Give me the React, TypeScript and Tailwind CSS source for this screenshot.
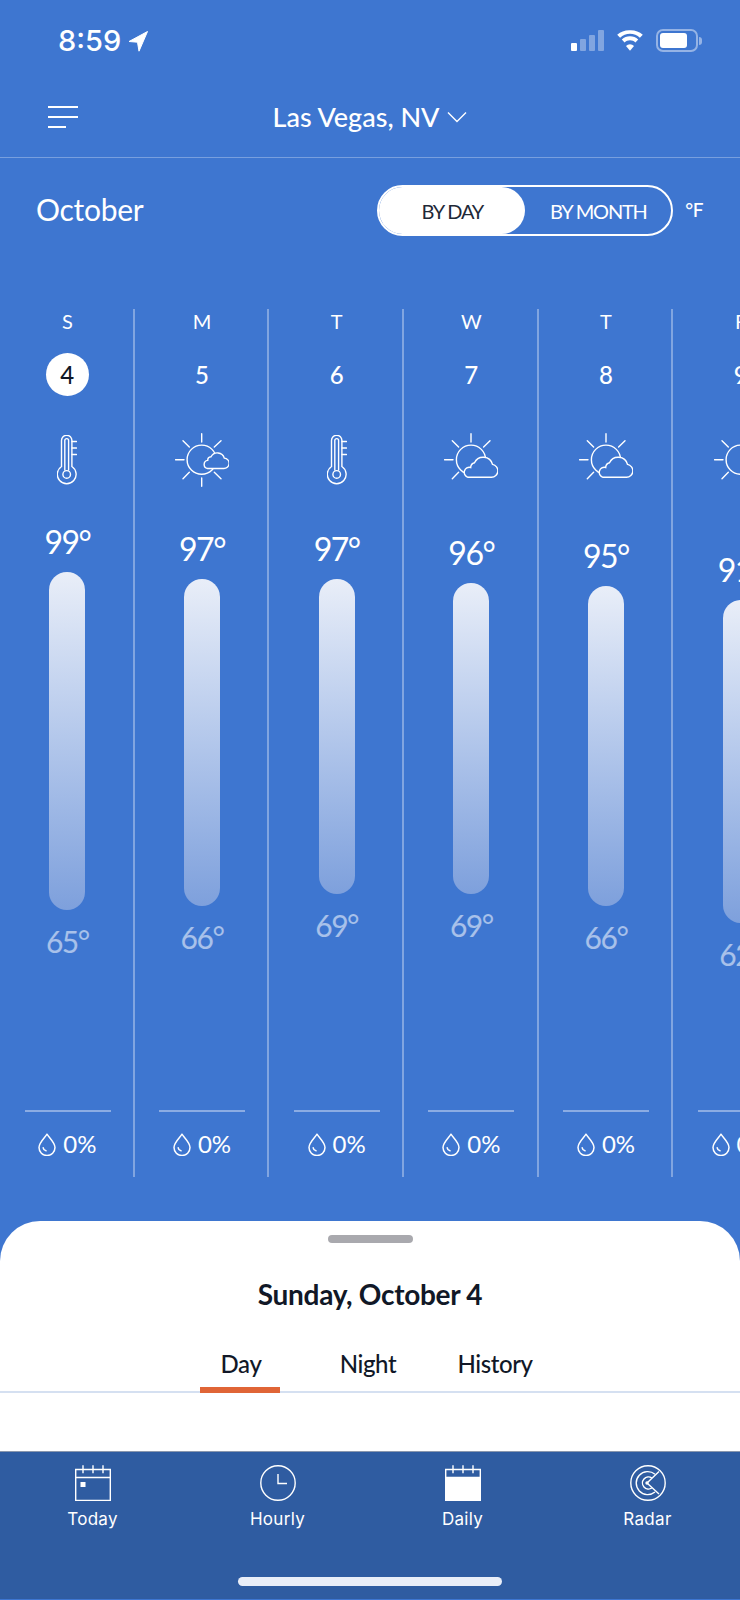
import { useState } from "react";

const font = "font-['Lato','Liberation_Sans',sans-serif]";

type IconKind = "thermo" | "sunMini" | "sunCloud";

const days: {
  letter: string;
  date: string;
  icon: IconKind;
  high: string;
  low: string;
  gap: number;
  bar: number;
}[] = [
  { letter: "S", date: "4", icon: "thermo", high: "99°", low: "65°", gap: 0, bar: 338 },
  { letter: "M", date: "5", icon: "sunMini", high: "97°", low: "66°", gap: 7, bar: 327 },
  { letter: "T", date: "6", icon: "thermo", high: "97°", low: "69°", gap: 7, bar: 315 },
  { letter: "W", date: "7", icon: "sunCloud", high: "96°", low: "69°", gap: 11, bar: 311 },
  { letter: "T", date: "8", icon: "sunCloud", high: "95°", low: "66°", gap: 14, bar: 320 },
  { letter: "F", date: "9", icon: "sunMini", high: "91°", low: "62°", gap: 28, bar: 323 },
];

function Thermometer() {
  return (
    <svg width="20" height="50" viewBox="0 0 20 50" fill="none" stroke="white" strokeWidth="1.4" strokeLinecap="round">
      <path d="M4.500 31.500V5.500a5.200 5.200 0 0 1 10.400 0v26a9.400 9.400 0 1 1-10.400 0Z" />
      <path d="M7.800 35V5.500a1.900 1.900 0 0 1 3.800 0V35" />
      <circle cx="9.700" cy="39.400" r="3.800" />
      <path d="M15 6.500h4.400M15 13h4.400M15 19.500h4.400" />
    </svg>
  );
}

function SunMini() {
  return (
    <svg width="54" height="54" viewBox="0 0 54 54" fill="none" stroke="white" strokeWidth="1.400" strokeLinecap="round">
      <circle cx="26.700" cy="26.700" r="14.600" />
      <path d="M26.700.7V9M26.700 45v8.300M.5 26.700h8.500M14.300 14 8 7.700M39.300 14 46 7.700M14.300 39.300 8 45.700M39.300 39.300 46 45.700" />
      <path
        fill="#3e76d0"
        d="M32.500 35.500h16a5.200 5.200 0 0 0 .8-10.400 7.200 7.200 0 0 0-13.300-1.300 3.600 3.600 0 0 0-3.300 3.600 4.100 4.100 0 0 0-.2 8.100Z"
      />
    </svg>
  );
}

function SunCloud() {
  return (
    <svg width="54" height="54" viewBox="0 0 54 54" fill="none" stroke="white" strokeWidth="1.400" strokeLinecap="round">
      <circle cx="27" cy="26.700" r="14.600" />
      <path d="M27 .7V9M.5 26.700h8.500M14.600 14 8.300 7.700M39.600 14 46 7.700M14.600 39.300 8.300 45.700" />
      <path
        fill="#3e76d0"
        d="M24 44.300h23.500a6.500 6.500 0 0 0 1-12.900 9.600 9.600 0 0 0-18-1.600 5 5 0 0 0-3.800 4.700 5 5 0 0 0-2.700 9.800Z"
      />
    </svg>
  );
}

function Drop() {
  return (
    <svg width="18" height="23" viewBox="0 0 18 23" fill="none" stroke="white" strokeWidth="1.500" strokeLinecap="round" strokeLinejoin="round">
      <path d="M9 1.200C6.500 5 1 9.500 1 14.500a8 8 0 0 0 16 0C17 9.500 11.500 5 9 1.200Z" />
      <path d="M5.200 14.800a3.600 3.600 0 0 0 2.800 3" />
    </svg>
  );
}

function CalendarIcon({ filled }: { filled?: boolean }) {
  return (
    <svg width="36" height="36" viewBox="0 0 36 36" fill="none" stroke="white" strokeWidth="1.400">
      <path d="M.7 4.500h34.600v31H.7z" />
      <path d="M.7 12.500h34.600" />
      <path d="M8 .3v8M18 .3v8M28 .3v8" />
      {filled ? <rect x="0.5" y="12.500" width="35" height="23" fill="white" stroke="none" /> : <rect x="5.500" y="17" width="5" height="5" fill="white" stroke="none" />}
    </svg>
  );
}

function ClockIcon() {
  return (
    <svg width="36" height="36" viewBox="0 0 36 36" fill="none" stroke="white" strokeWidth="1.400">
      <circle cx="18" cy="18" r="17.200" />
      <path d="M18 9v9.500h9" />
    </svg>
  );
}

function RadarIcon() {
  return (
    <svg width="36" height="36" viewBox="0 0 36 36" fill="none" stroke="white" strokeWidth="1.400">
      <circle cx="18" cy="18" r="17.200" />
      <path d="M29 6.500 17 18l12 11" />
      <path d="M25 9.200a11.500 11.500 0 1 0 0 17.800" />
      <path d="M21.800 13a6 6 0 1 0 0 10" />
      <circle cx="17" cy="18" r="1" fill="white" />
    </svg>
  );
}

function DayColumn({ day, active }: { day: (typeof days)[number]; active: boolean }) {
  return (
    <div className="relative flex h-full w-[134.67px] shrink-0 flex-col items-center border-r-2 border-white/35 pl-[2px] text-white">
      <div className="text-[20px] leading-6">{day.letter}</div>
      <div className={`mt-[20px] flex h-[43px] w-[43px] items-center justify-center rounded-full text-[24px] font-medium ${active ? "bg-white text-[#111827]" : ""}`}>
        {day.date}
      </div>
      <div className="mt-[37px] flex h-[54px] items-center justify-center">
        {day.icon === "thermo" && <Thermometer />}
        {day.icon === "sunMini" && <SunMini />}
        {day.icon === "sunCloud" && <SunCloud />}
      </div>
      <div className="text-[32px] leading-[38px] tracking-[-1.500px]" style={{ marginTop: 36 + day.gap }}>
        {day.high}
      </div>
      <div
        className="mt-[11px] w-9 shrink-0 rounded-[18px] bg-gradient-to-b from-[#e9eef8] to-[#7ea0dc]"
        style={{ height: day.bar }}
      />
      <div className="mt-[13px] text-[30px] leading-9 tracking-[-1.500px] text-white/55">{day.low}</div>
      <div className="absolute top-[801px] left-[24.5px] h-[2px] w-[86px] bg-white/40" />
      <div className="absolute top-[820px] flex items-center gap-[7px] text-[24px] leading-[30px]">
        <Drop />
        <span>0%</span>
      </div>
    </div>
  );
}

export default function App() {
  const [tab] = useState("Day");
  const tabs = ["Day", "Night", "History"];

  return (
    <div className={`flex h-[1600px] w-[740px] flex-col overflow-hidden bg-[#3e76d0] ${font}`}>
      {/* status bar */}
      <div className="flex h-[82px] shrink-0 items-start justify-between pt-[26px] pr-[38px] pl-[58px] text-white">
        <div className="flex items-center gap-[7px] font-['Inter',sans-serif] text-[29px] leading-[30px] font-medium">
          <span>8:59</span>
          <svg width="20" height="21" viewBox="0 0 20 21" fill="white" stroke="white" strokeWidth="1" strokeLinejoin="round">
            <path d="M19.500.5 1 10.500l8.500.7 1.500 9Z" />
          </svg>
        </div>
        <div className="mt-[3px] flex items-center gap-[12px]">
          <div className="flex items-end gap-[3px]">
            <span className="h-[8px] w-[6px] rounded-[1px] bg-white" />
            <span className="h-[12px] w-[6px] rounded-[1px] bg-white/35" />
            <span className="h-[16px] w-[6px] rounded-[1px] bg-white/35" />
            <span className="h-[21px] w-[6px] rounded-[1px] bg-white/35" />
          </div>
          <svg width="28" height="21" viewBox="0 0 28 21" fill="white">
            <path d="M14 3.800c3.800 0 7.300 1.500 9.900 4l2.900-3A18 18 0 0 0 14 .2 18 18 0 0 0 1.200 4.800l2.900 3A14.300 14.300 0 0 1 14 3.800Z" />
            <path d="M14 10.300c2.100 0 4 .8 5.400 2.100l2.800-2.800a11.800 11.800 0 0 0-16.400 0l2.800 2.800c1.400-1.300 3.300-2.100 5.400-2.100Z" />
            <path d="M14 20.800l4-4.700a5.500 5.500 0 0 0-8 0Z" />
          </svg>
          <div className="flex items-center gap-[1px]">
            <div className="flex h-[23px] w-[42px] items-center rounded-[7px] border-2 border-white/45 p-[2px]">
              <div className="h-full w-[27px] rounded-[3px] bg-white" />
            </div>
            <div className="h-[8px] w-[3px] rounded-r-full bg-white/45" />
          </div>
        </div>
      </div>

      {/* location */}
      <div className="relative flex h-[76px] shrink-0 items-center justify-center border-b border-white/30 pb-[6px] text-white">
        <div className="absolute top-[24px] left-[48px] flex w-[30px] flex-col gap-[8px]">
          <span className="h-[2px] w-[30px] bg-white" />
          <span className="h-[2px] w-[30px] bg-white" />
          <span className="h-[2px] w-[18px] bg-white" />
        </div>
        <div className="flex items-center gap-[8px]">
          <span className="text-[27px] leading-8 font-medium">Las Vegas, NV</span>
          <svg width="20" height="12" viewBox="0 0 20 12" fill="none" stroke="white" strokeWidth="1.400">
            <path d="M1 1.500 10 10.500 19 1.500" />
          </svg>
        </div>
      </div>

      {/* month + toggle */}
      <div className="flex h-[151px] shrink-0 items-start justify-between pt-[27px] pr-[37px] pl-[36px] text-white">
        <div className="mt-[6px] text-[30px] leading-9 tracking-[-0.3px]">October</div>
        <div className="flex items-center gap-[12px]">
          <div className="flex h-[51px] w-[296px] items-center rounded-full border-2 border-white">
            <div className="flex h-full w-[146px] items-center justify-center rounded-full bg-white text-[20px] tracking-[-1.200px] text-[#1f2937]">BY DAY</div>
            <div className="flex flex-1 items-center justify-center text-[20px] tracking-[-1.200px] text-white">BY MONTH</div>
          </div>
          <div className="text-[19px] font-medium tracking-[-0.5px]">°F</div>
        </div>
      </div>

      {/* days */}
      <div className="flex h-[868px] shrink-0 overflow-hidden">
        {days.map((d, i) => (
          <DayColumn key={d.date} day={d} active={i === 0} />
        ))}
      </div>

      {/* sheet */}
      <div className="mt-[44px] flex h-[230px] shrink-0 flex-col items-center rounded-t-[40px] bg-white pt-[14px]">
        <div className="h-[8px] w-[85px] rounded-full bg-[#a9a9ae]" />
        <div className="mt-[33px] text-[28px] leading-9 font-bold tracking-[-0.3px] text-[#111827]">Sunday, October 4</div>
        <div className="relative mt-[32px] flex h-[49px] w-full justify-center border-b-2 border-[#d5e0f1]">
          {tabs.map((t, i) => (
            <div
              key={t}
              className={`absolute top-[4px] text-center text-[24px] leading-[32px] font-medium tracking-[-0.4px] text-[#111827] ${i === 0 ? "left-[201px] w-[80px]" : i === 1 ? "left-[328px] w-[80px]" : "left-[445px] w-[100px]"}`}
            >
              {t}
              {t === tab && <div className="absolute top-[39px] left-[-1px] h-[6px] w-[80px] bg-[#e06536]" />}
            </div>
          ))}
        </div>
      </div>

      {/* bottom nav */}
      <div className="relative flex h-[148px] shrink-0 flex-col border-t border-[#8a97ad] bg-[#2f5ca1]">
        <div className="flex pt-[13px] text-white">
          {[
            { label: "Today", icon: <CalendarIcon /> },
            { label: "Hourly", icon: <ClockIcon /> },
            { label: "Daily", icon: <CalendarIcon filled /> },
            { label: "Radar", icon: <RadarIcon /> },
          ].map((n) => (
            <div key={n.label} className="flex w-[185px] flex-col items-center">
              {n.icon}
              <span className="mt-[6px] font-['Inter',sans-serif] text-[17px] leading-6 tracking-[0.3px]">{n.label}</span>
            </div>
          ))}
        </div>
        <div className="absolute top-[125px] left-[238px] h-[9px] w-[264px] rounded-full bg-[#e9eef8]" />
      </div>
    </div>
  );
}
